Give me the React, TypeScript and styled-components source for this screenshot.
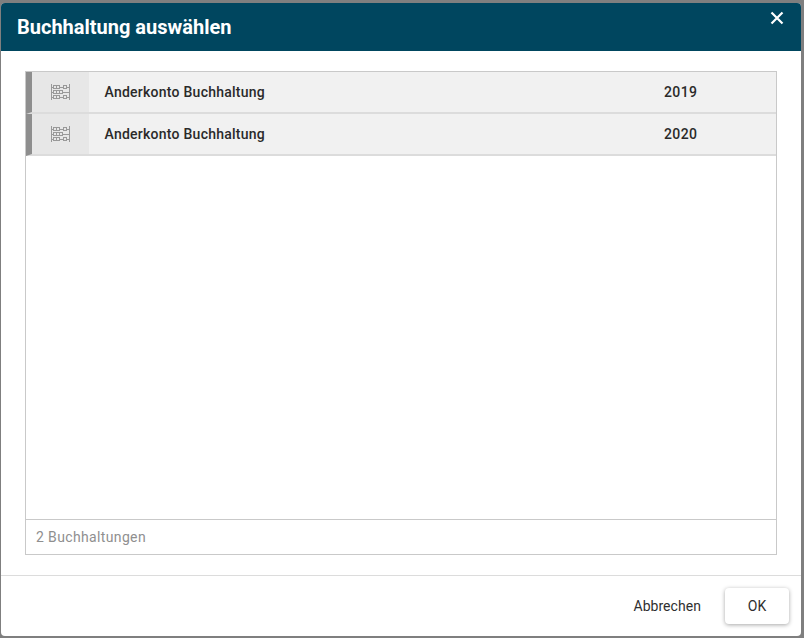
import { createGlobalStyle } from "styled-components";
import styled from "styled-components";

const GlobalStyle = createGlobalStyle`
  html, body {
    margin: 0;
    padding: 0;
    background: #7f7f7f;
    font-family: Roboto, "Liberation Sans", sans-serif;
  }
`;

const books = [
  { name: "Anderkonto Buchhaltung", year: 2019 },
  { name: "Anderkonto Buchhaltung", year: 2020 },
];

const AbacusIcon = () => (
  <svg width="19" height="16" viewBox="0 0 19 16" fill="none" stroke="#999" strokeWidth="1" shapeRendering="crispEdges">
    <path d="M0.5 0v16M18.5 0v16" />
    <path d="M1 3.5h1M9 3.5h3M16 3.5h2M1 8.5h1M12 8.5h6M1 13.5h1M9 13.5h3M16 13.5h2" />
    <rect x="2.5" y="1.5" width="3" height="3" />
    <rect x="5.5" y="1.5" width="3" height="3" />
    <rect x="12.5" y="1.5" width="3" height="3" />
    <rect x="2.5" y="6.5" width="3" height="3" />
    <rect x="5.5" y="6.5" width="3" height="3" />
    <rect x="8.5" y="6.5" width="3" height="3" />
    <rect x="2.5" y="11.5" width="3" height="3" />
    <rect x="5.5" y="11.5" width="3" height="3" />
    <rect x="12.5" y="11.5" width="3" height="3" />
  </svg>
);

export default function App() {
  return (
    <Page>
      <GlobalStyle />
      <Dialog>
        <Header>
          <Title>Buchhaltung auswählen</Title>
          <CloseButton aria-label="Schließen">
            <svg width="14" height="14" viewBox="0 0 14 14" stroke="#fff" strokeWidth="2.2" fill="none">
              <path d="M1.5 1.5l11 11M12.5 1.5l-11 11" />
            </svg>
          </CloseButton>
        </Header>
        <Content>
          <Panel>
            <List>
              {books.map((book) => (
                <Row key={book.year}>
                  <IconCell>
                    <AbacusIcon />
                  </IconCell>
                  <Name>{book.name}</Name>
                  <Year>{book.year}</Year>
                </Row>
              ))}
            </List>
            <Summary>2 Buchhaltungen</Summary>
          </Panel>
        </Content>
        <Footer>
          <TextButton>Abbrechen</TextButton>
          <OkButton>OK</OkButton>
        </Footer>
      </Dialog>
    </Page>
  );
}

const Page = styled.div`
  width: 804px;
  height: 638px;
  padding: 3px 3px 2px 1px;
  box-sizing: border-box;
`;

const Dialog = styled.div`
  height: 100%;
  display: flex;
  flex-direction: column;
  background: #fff;
  border-radius: 4px;
  overflow: hidden;
`;

const Header = styled.header`
  height: 48px;
  flex: none;
  background: #00465f;
  display: flex;
  justify-content: space-between;
  padding: 0 17px 0 16px;
`;

const Title = styled.h1`
  margin: 12px 0 0;
  color: #fff;
  font-size: 20px;
  line-height: 24px;
  font-weight: 700;
`;

const CloseButton = styled.button`
  border: 0;
  padding: 0;
  margin-top: 8px;
  width: 14px;
  height: 14px;
  background: none;
  display: flex;
`;

const Content = styled.main`
  flex: 1;
  padding: 20px 24px 20px 24px;
  min-height: 0;
  display: flex;
`;

const Panel = styled.section`
  flex: 1;
  display: flex;
  flex-direction: column;
  border: 1px solid #c9c9c9;
`;

const List = styled.ul`
  flex: 1;
  margin: 0;
  padding: 0;
  list-style: none;
`;

const Row = styled.li`
  height: 40px;
  display: flex;
  align-items: center;
  background: #f1f1f1;
  border-left: 6px solid #8e8e8e;
  border-bottom: 2px solid #dcdcdc;
`;

const IconCell = styled.div`
  width: 57px;
  height: 100%;
  flex: none;
  background: #e7e7e7;
  display: flex;
  align-items: center;
  justify-content: center;
`;

const Name = styled.span`
  width: 559.5px;
  margin-left: 15.5px;
  color: #2a2a2a;
  font-size: 14px;
  font-weight: 500;
  letter-spacing: 0.25px;
`;

const Year = styled.span`
  color: #2a2a2a;
  font-size: 14px;
  font-weight: 500;
  letter-spacing: 0.4px;
`;

const Summary = styled.div`
  height: 34px;
  flex: none;
  border-top: 1px solid #c9c9c9;
  padding-left: 10px;
  display: flex;
  align-items: center;
  color: #8f8f8f;
  font-size: 14px;
  letter-spacing: 0.36px;
`;

const Footer = styled.footer`
  height: 61px;
  flex: none;
  box-sizing: border-box;
  border-top: 1px solid #dcdcdc;
  padding: 12px 12px 0 0;
  display: flex;
  justify-content: flex-end;
  align-items: flex-start;
  gap: 8px;
`;

const TextButton = styled.button`
  height: 36px;
  padding: 0 16px;
  border: 0;
  background: none;
  color: #2f2f2f;
  font-family: inherit;
  font-size: 14px;
  letter-spacing: 0.05px;
`;

const OkButton = styled(TextButton)`
  width: 64px;
  padding: 0;
  background: #fff;
  border-radius: 4px;
  box-shadow: 0 1px 4px rgba(0, 0, 0, 0.35);
`;
